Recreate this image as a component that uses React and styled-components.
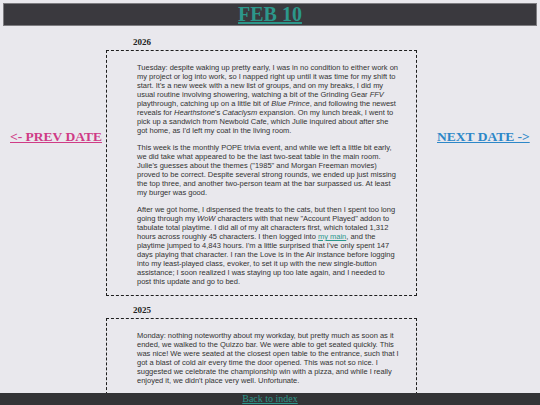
import React from "react";
import styled, { createGlobalStyle } from "styled-components";

const GlobalStyle = createGlobalStyle`
  html, body {
    background: #e9e8ed;
  }
  body {
    margin: 3px;
    font-family: "Liberation Serif", "Times New Roman", serif;
    color: #333;
  }
`;

const Header = styled.header`
  background: #3a393e;
  border: 1px solid #7d7c80;
  height: 21px;
  display: flex;
  align-items: center;
  justify-content: center;
`;

const Title = styled.a`
  font-family: "Liberation Serif", serif;
  font-weight: 700;
  font-size: 20px;
  line-height: 21px;
  color: #2c978b;
  text-decoration: underline;
  text-decoration-thickness: 2px;
  text-underline-offset: 1px;
`;

const Layout = styled.div`
  display: grid;
  grid-template-columns: 103px 311px 1fr;
  align-items: start;
`;

const NavLink = styled.a`
  display: block;
  margin-top: 103px;
  padding-left: ${(p) => p.$indent}px;
  font-family: "Liberation Serif", serif;
  font-weight: 700;
  font-size: 13.5px;
  color: ${(p) => p.$color};
  text-decoration: underline;
  white-space: nowrap;
`;

const Column = styled.main`
  padding: 2px 0 40px;
`;

const Year = styled.h3`
  margin: 8px 0 2px 27px;
  font-size: 9px;
  line-height: 12px;
  font-weight: 700;
  color: #222;
`;

const Entry = styled.div`
  border: 1px dashed #1e1e1e;
  padding: 4px 16px 1px 30px;
  margin-bottom: 4px;
`;

const Para = styled.p`
  margin: 8px 0;
  font-family: "Liberation Sans", Arial, sans-serif;
  font-size: 7.5px;
  line-height: 9px;
  color: #333;
`;

const Inline = styled.a`
  color: #2c978b;
  text-decoration: underline;
`;

const Footer = styled.footer`
  position: fixed;
  left: 0;
  right: 0;
  bottom: 0;
  height: 12px;
  background: #333336;
  display: flex;
  align-items: center;
  justify-content: center;
`;

const FooterLink = styled.a`
  font-family: "Liberation Serif", serif;
  font-size: 10px;
  line-height: 12px;
  color: #2c978b;
  text-decoration: underline;
`;

export default function App() {
  return (
    <>
      <GlobalStyle />
      <Header>
        <Title>FEB 10</Title>
      </Header>
      <Layout>
        <NavLink $color="#cf3b86" $indent={7}>&lt;- PREV DATE</NavLink>
        <Column>
          <Year>2026</Year>
          <Entry>
            <Para>
              Tuesday: despite waking up pretty early, I was in no condition to
              either work on my project or log into work, so I napped right up
              until it was time for my shift to start. It's a new week with a new
              list of groups, and on my breaks, I did my usual routine involving
              showering, watching a bit of the Grinding Gear <i>FFV</i>{" "}
              playthrough, catching up on a little bit of <i>Blue Prince</i>, and
              following the newest reveals for <i>Hearthstone</i>'s{" "}
              <i>Cataclysm</i> expansion. On my lunch break, I went to pick up a
              sandwich from Newbold Cafe, which Julie inquired about after she got
              home, as I'd left my coat in the living room.
            </Para>
            <Para>
              This week is the monthly POPE trivia event, and while we left a
              little bit early, we did take what appeared to be the last two-seat
              table in the main room. Julie's guesses about the themes ("1985"
              and Morgan Freeman movies) proved to be correct. Despite several
              strong rounds, we ended up just missing the top three, and another
              two-person team at the bar surpassed us. At least my burger was
              good.
            </Para>
            <Para>
              After we got home, I dispensed the treats to the cats, but then I
              spent too long going through my <i>WoW</i> characters with that new
              "Account Played" addon to tabulate total playtime. I did all of my
              alt characters first, which totaled 1,312 hours across roughly 45
              characters. I then logged into <Inline>my main</Inline>, and the
              playtime jumped to 4,843 hours. I'm a little surprised that I've
              only spent 147 days playing that character. I ran the Love is in
              the Air instance before logging into my least-played class, evoker,
              to set it up with the new single-button assistance; I soon realized
              I was staying up too late again, and I needed to post this update
              and go to bed.
            </Para>
          </Entry>
          <Year>2025</Year>
          <Entry>
            <Para>
              Monday: nothing noteworthy about my workday, but pretty much as soon
              as it ended, we walked to the Quizzo bar. We were able to get seated
              quickly. This was nice! We were seated at the closest open table to
              the entrance, such that I got a blast of cold air every time the
              door opened. This was not so nice. I suggested we celebrate the
              championship win with a pizza, and while I really enjoyed it, we
              didn't place very well. Unfortunate.
            </Para>
          </Entry>
        </Column>
        <NavLink $color="#2d87c8" $indent={20}>NEXT DATE -&gt;</NavLink>
      </Layout>
      <Footer>
        <FooterLink>Back to index</FooterLink>
      </Footer>
    </>
  );
}
